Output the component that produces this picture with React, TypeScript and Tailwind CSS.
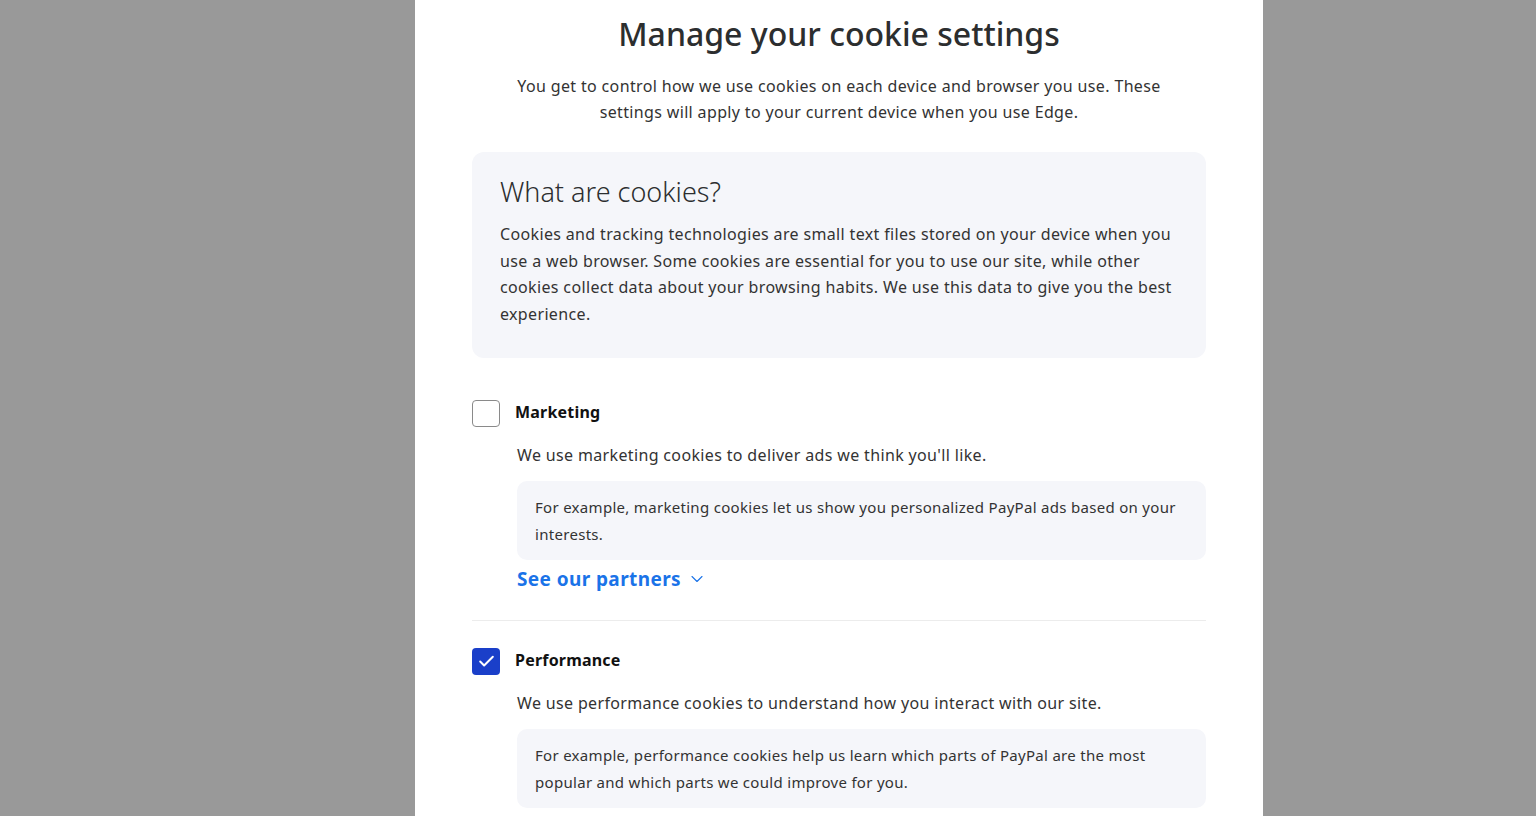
import { Check, ChevronDown } from 'lucide-react';

const font = { fontFamily: '"Noto Sans", "Open Sans", Arial, sans-serif' };

const CookieOption = ({
  label,
  checked,
  description,
  example,
  showPartners,
}: {
  label: string;
  checked: boolean;
  description: string;
  example: string;
  showPartners?: boolean;
}) => (
  <div>
    <div className="flex items-center gap-[15px]">
      {checked ? (
        <div className="w-[28px] h-[27px] rounded-[4px] bg-[#1a3fc9] flex items-center justify-center">
          <Check className="w-[19px] h-[19px] text-white" strokeWidth={2.5} />
        </div>
      ) : (
        <div className="w-[28px] h-[27px] rounded-[4px] border border-[#8a8a8a] bg-white" />
      )}
      <span className="pb-[3px] text-[16px] font-bold text-[#111] leading-[24px] tracking-[0.2px]">{label}</span>
    </div>
    <div className="pl-[45px]">
      <p className="mt-[15px] text-[16px] leading-[26px] text-[#333] tracking-[0.35px]">{description}</p>
      <div className="mt-[13px] rounded-[10px] bg-[#f5f6fa] px-[18px] py-[13px] text-[15px] leading-[26.5px] text-[#333] tracking-[0.3px]">
        {example}
      </div>
      {showPartners && (
        <button className="mt-[7px] flex items-center gap-[6px] text-[19px] font-bold leading-[24px] tracking-[0.4px] text-[#1a73e8]">
          See our partners
          <ChevronDown className="w-[20px] h-[20px]" strokeWidth={1.3} />
        </button>
      )}
    </div>
  </div>
);

export default function App() {
  return (
    <div className="h-screen overflow-hidden bg-[#999999] pl-[415px]" style={font}>
      <div className="w-[848px] h-full bg-white px-[57px] pt-[12px]">
        <h1 className="text-center text-[32px] leading-[44px] font-medium text-[#2c2e2f]">
          Manage your cookie settings
        </h1>
        <p className="mt-[17px] text-center text-[16px] leading-[26px] text-[#333] px-[30px] tracking-[0.35px]">
          You get to control how we use cookies on each device and browser you use. These settings will apply to your
          current device when you use Edge.
        </p>

        <div className="mt-[27px] rounded-[12px] bg-[#f5f6fa] px-[28px] pt-[22px] pb-[31px]">
          <h2 className="text-[27px] leading-[36px] font-light text-[#2c2e2f]">What are cookies?</h2>
          <p className="mt-[11px] text-[16px] leading-[26.5px] text-[#333] tracking-[0.35px]">
            Cookies and tracking technologies are small text files stored on your device when you use a web browser.
            Some cookies are essential for you to use our site, while other cookies collect data about your browsing
            habits. We use this data to give you the best experience.
          </p>
        </div>

        <div className="mt-[42px]">
          <CookieOption
            label="Marketing"
            checked={false}
            description="We use marketing cookies to deliver ads we think you'll like."
            example="For example, marketing cookies let us show you personalized PayPal ads based on your interests."
            showPartners
          />
        </div>

        <div className="mt-[29px] border-t border-[#ececec]" />

        <div className="mt-[27px]">
          <CookieOption
            label="Performance"
            checked
            description="We use performance cookies to understand how you interact with our site."
            example="For example, performance cookies help us learn which parts of PayPal are the most popular and which parts we could improve for you."
          />
        </div>
      </div>
    </div>
  );
}
